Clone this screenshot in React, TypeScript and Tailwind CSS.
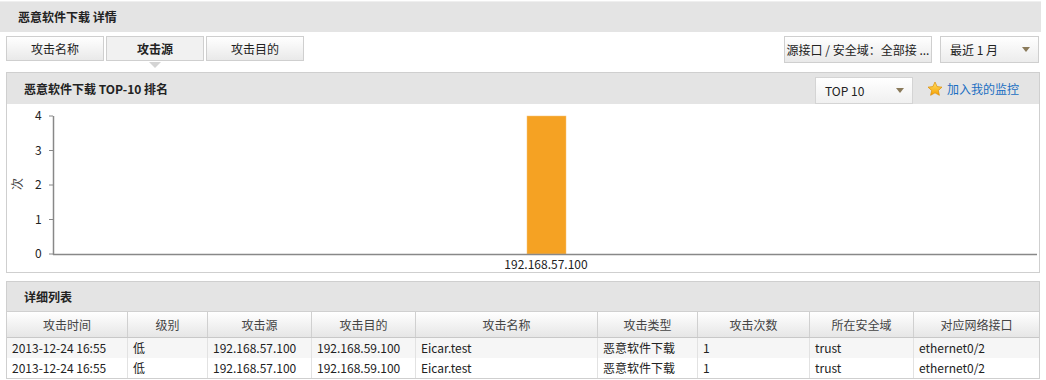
import React from "react";

const font = { fontFamily: '"Noto Sans CJK SC", "Noto Sans", sans-serif' };

const columns = [
  { title: "攻击时间", w: "w-[120px]" },
  { title: "级别", w: "w-[80px]" },
  { title: "攻击源", w: "w-[104px]" },
  { title: "攻击目的", w: "w-[104px]" },
  { title: "攻击名称", w: "w-[182px]" },
  { title: "攻击类型", w: "w-[100px]" },
  { title: "攻击次数", w: "w-[112px]" },
  { title: "所在安全域", w: "w-[104px]" },
  { title: "对应网络接口", w: "flex-1" },
];

const rows = [
  ["2013-12-24 16:55", "低", "192.168.57.100", "192.168.59.100", "Eicar.test", "恶意软件下载", "1", "trust", "ethernet0/2"],
  ["2013-12-24 16:55", "低", "192.168.57.100", "192.168.59.100", "Eicar.test", "恶意软件下载", "1", "trust", "ethernet0/2"],
];

function Caret() {
  return <span className="inline-block w-0 h-0 border-l-[4px] border-r-[4px] border-t-[5px] border-l-transparent border-r-transparent border-t-[#8a7a5a]" />;
}

function Chart() {
  const ticks = [4, 3, 2, 1, 0];
  const top = 12;
  const base = 150;
  const step = (base - top) / 4;
  return (
    <svg width="1032" height="168" className="block">
      <text x="11" y="82" fontSize="12" fill="#444" transform="rotate(-90 15 82)" style={font}>次</text>
      {ticks.map((t, i) => (
        <g key={t}>
          <line x1="42" x2="46" y1={top + i * step} y2={top + i * step} stroke="#888" strokeWidth="1" />
          <text x="28" y={top + i * step + 4} fontSize="12" fill="#222" style={font}>{t}</text>
        </g>
      ))}
      <line x1="46.5" x2="46.5" y1={top} y2={base + 1} stroke="#888" strokeWidth="1.5" />
      <rect x="520" y={top} width="39" height={base - top} fill="#f5a223" stroke="#f8c27a" strokeWidth="0.5" />
      <line x1="46" x2="1030" y1={base + 0.5} y2={base + 0.5} stroke="#888" strokeWidth="1.5" />
      <text x="539" y="165" fontSize="12" fill="#222" textAnchor="middle" style={font}>192.168.57.100</text>
    </svg>
  );
}

export default function App() {
  return (
    <div className="w-[1046px] h-[380px] bg-white overflow-hidden text-[12px] text-[#222]" style={font}>
      {/* page header */}
      <div className="w-[1041px] h-[31px] mt-[1px] bg-[#e4e4e4] border-t border-[#efefef] flex items-center pl-[18px] font-bold text-[12px]">
        恶意软件下载 详情
      </div>

      {/* tabs + filters */}
      <div className="flex items-start justify-between pl-[6px] pr-[7px] mt-[4px] h-[36px]">
        <div className="flex gap-[2px]">
          <div className="w-[98px] h-[25px] flex items-center justify-center border border-[#cfcfcf] bg-gradient-to-b from-white to-[#e9e9e9]">攻击名称</div>
          <div className="relative w-[98px] h-[25px] flex items-center justify-center border border-[#cfcfcf] bg-[#f1f1f1] font-bold">
            攻击源
            <span className="absolute left-1/2 -translate-x-1/2 top-[25px] w-0 h-0 border-l-[6px] border-r-[6px] border-t-[6px] border-l-transparent border-r-transparent border-t-[#d4d4d4]" />
          </div>
          <div className="w-[98px] h-[25px] flex items-center justify-center border border-[#cfcfcf] bg-gradient-to-b from-white to-[#e9e9e9]">攻击目的</div>
        </div>
        <div className="flex gap-[8px]">
          <div className="w-[148px] h-[27px] flex items-center justify-center border border-[#cfcfcf] bg-gradient-to-b from-white to-[#e9e9e9] whitespace-nowrap">
            源接口 / 安全域：全部接 ...
          </div>
          <div className="w-[99px] h-[27px] flex items-center justify-between pl-[9px] pr-[8px] border border-[#cfcfcf] bg-gradient-to-b from-white to-[#ececec]">
            <span>最近 1 月</span>
            <Caret />
          </div>
        </div>
      </div>

      {/* chart panel */}
      <div className="ml-[6px] mr-[6px] border border-[#cfcfcf] bg-white">
        <div className="h-[31px] bg-[#e4e4e4] flex items-center justify-between pl-[17px] pr-[20px]">
          <span className="font-bold">恶意软件下载 TOP-10 排名</span>
          <div className="flex items-center">
            <div className="w-[98px] h-[27px] mt-[4px] flex items-center justify-between pl-[9px] pr-[8px] border border-[#d4d4d4] bg-gradient-to-b from-white to-[#f0f0f0]">
              <span>TOP 10</span>
              <Caret />
            </div>
            <svg width="16" height="16" viewBox="0 0 24 24" className="ml-[14px] mr-[4px]">
              <defs>
                <linearGradient id="st" x1="0" y1="0" x2="0" y2="1">
                  <stop offset="0" stopColor="#ffe066" />
                  <stop offset="1" stopColor="#f5a000" />
                </linearGradient>
              </defs>
              <path d="M12 1.5l3.2 6.9 7.3.8-5.5 5 1.6 7.3L12 17.8l-6.6 3.7 1.6-7.3-5.5-5 7.3-.8z" fill="url(#st)" stroke="#d98a00" strokeWidth="1" />
            </svg>
            <span className="text-[#1a6ec2]">加入我的监控</span>
          </div>
        </div>
        <Chart />
      </div>

      {/* detail list */}
      <div className="ml-[6px] mr-[6px] mt-[8px] border border-[#cfcfcf] bg-white">
        <div className="h-[29px] bg-[#e4e4e4] flex items-center pl-[17px] font-bold">详细列表</div>
        <div className="flex h-[27px] border-t border-[#d0d0d0] border-b border-b-[#c8c8c8] bg-gradient-to-b from-white to-[#e6e6e6] text-[#444]">
          {columns.map((c, i) => (
            <div key={c.title} className={`${c.w} flex items-center justify-center ${i > 0 ? "border-l border-[#d0d0d0]" : ""}`}>
              {c.title}
            </div>
          ))}
        </div>
        {rows.map((r, ri) => (
          <div key={ri} className={`flex h-[20px] ${ri === 0 ? "bg-[#f6f6f6]" : "bg-white"}`}>
            {r.map((v, i) => (
              <div key={i} className={`${columns[i].w} flex items-center pl-[5px] whitespace-nowrap ${i > 0 ? "border-l border-[#e2e2e2]" : ""}`}>
                {v}
              </div>
            ))}
          </div>
        ))}
      </div>
    </div>
  );
}
